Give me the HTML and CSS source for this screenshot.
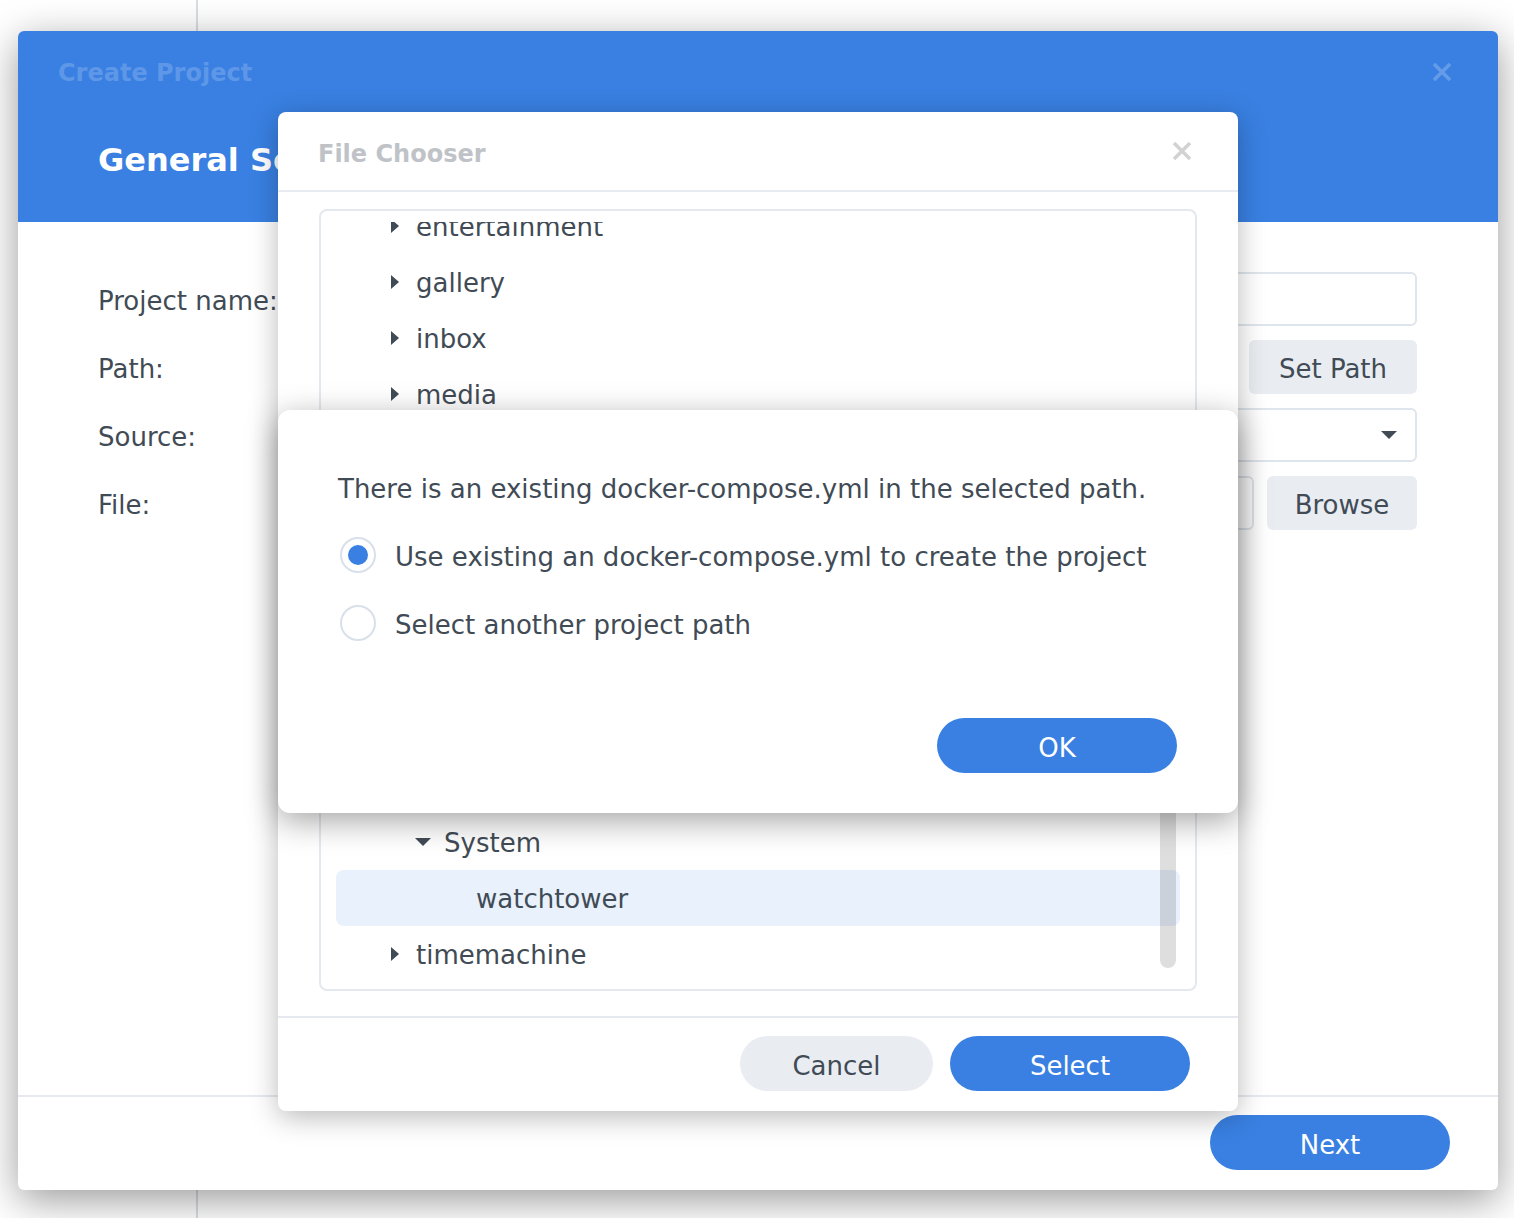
FILE: index.html
```html
<!DOCTYPE html>
<html lang="en">
<head>
<meta charset="utf-8">
<title>Create Project</title>
<link rel="stylesheet" href="styles.css">
</head>
<body>
<div class="wizard">
  <div class="wiz-head">
    <div class="wiz-top">
      <span class="wiz-title">Create Project</span>
      <svg class="x-icon wiz-close" viewBox="0 0 20 20"><path d="M2 2L18 18M18 2L2 18"/></svg>
    </div>
    <div class="wiz-step">General Settings</div>
  </div>
  <div class="wiz-body">
    <div class="form">
      <div class="frow"><span class="flabel">Project name:</span><div class="ctl"><div class="input"></div></div></div>
      <div class="frow"><span class="flabel">Path:</span><div class="ctl"><div class="path-text"></div><button class="btn btn-gray btn-setpath">Set Path</button></div></div>
      <div class="frow"><span class="flabel">Source:</span><div class="ctl"><div class="input select"><span class="caret"></span></div></div></div>
      <div class="frow"><span class="flabel">File:</span><div class="ctl"><div class="input"></div><button class="btn btn-gray btn-browse">Browse</button></div></div>
    </div>
  </div>
  <div class="wiz-foot"><button class="btn btn-blue btn-next">Next</button></div>

  <div class="chooser">
    <div class="ch-head">
      <span class="ch-title">File Chooser</span>
      <svg class="x-icon ch-close" viewBox="0 0 20 20"><path d="M2 2L18 18M18 2L2 18"/></svg>
    </div>
    <div class="ch-body">
      <div class="tree">
        <div class="tree-view">
          <ul class="tree-list">
            <li class="node l1"><span class="tw"><i class="tri-r"></i></span><span class="nm">entertainment</span></li>
            <li class="node l1"><span class="tw"><i class="tri-r"></i></span><span class="nm">gallery</span></li>
            <li class="node l1"><span class="tw"><i class="tri-r"></i></span><span class="nm">inbox</span></li>
            <li class="node l1"><span class="tw"><i class="tri-r"></i></span><span class="nm">media</span></li>
            <li class="node l1"><span class="tw"><i class="tri-r"></i></span><span class="nm">music</span></li>
            <li class="node l1"><span class="tw"><i class="tri-r"></i></span><span class="nm">photo</span></li>
            <li class="node l1"><span class="tw"><i class="tri-d"></i></span><span class="nm">docker</span></li>
            <li class="node l2"><span class="tw"><i class="tri-r"></i></span><span class="nm">Development</span></li>
            <li class="node l2"><span class="tw"><i class="tri-r"></i></span><span class="nm">Home</span></li>
            <li class="node l2"><span class="tw"><i class="tri-r"></i></span><span class="nm">Media</span></li>
            <li class="node l2"><span class="tw"><i class="tri-r"></i></span><span class="nm">Network</span></li>
            <li class="node l2"><span class="tw"><i class="tri-d"></i></span><span class="nm">System</span></li>
            <li class="node l3 selected"><span class="tw"></span><span class="nm">watchtower</span></li>
            <li class="node l1"><span class="tw"><i class="tri-r"></i></span><span class="nm">timemachine</span></li>
          </ul>
        </div>
        <div class="scrollbar"></div>
      </div>
    </div>
    <div class="ch-foot">
      <button class="btn btn-gray btn-cancel">Cancel</button>
      <button class="btn btn-blue btn-select">Select</button>
    </div>

    <div class="alert">
      <p class="alert-msg">There is an existing docker-compose.yml in the selected path.</p>
      <div class="radio-row"><span class="radio checked"></span><span class="rtext">Use existing an docker-compose.yml to create the project</span></div>
      <div class="radio-row"><span class="radio"></span><span class="rtext">Select another project path</span></div>
      <div class="alert-foot"><button class="btn btn-blue btn-ok">OK</button></div>
    </div>
  </div>
</div>
</body>
</html>
```

FILE: styles.css
```css
* { box-sizing: border-box; }
html, body { margin: 0; padding: 0; }
body {
  width: 1514px;
  height: 1218px;
  overflow: hidden;
  background: #fff linear-gradient(to right, transparent 196px, #d9dee5 196px, #d9dee5 198px, transparent 198px);
  font-family: "DejaVu Sans", Verdana, sans-serif;
  color: #414b55;
  padding: 31px 0 0 18px;
}

.btn {
  font-family: inherit;
  font-size: 26px;
  border: none;
  height: 55px;
  padding: 4px 0 0;
  cursor: pointer;
}
.btn-gray { background: #e9edf2; color: #414b55; border-radius: 6px; }
.btn-blue { background: #3980e2; color: #fff; border-radius: 28px; }

.x-icon { width: 20px; height: 20px; fill: none; stroke-width: 3.6; }

/* wizard */
.wizard {
  position: relative;
  width: 1480px;
  height: 1159px;
  background: #fff;
  border-radius: 6px;
  box-shadow: 0 10px 40px rgba(0, 0, 0, 0.4);
  display: flex;
  flex-direction: column;
}
.wiz-head {
  height: 191px;
  background: #3980e2;
  border-radius: 6px 6px 0 0;
  padding: 25px 46px 0 40px;
}
.wiz-top { display: flex; justify-content: space-between; align-items: center; height: 32px; }
.wiz-title { font-weight: bold; font-size: 24px; color: rgba(255, 255, 255, 0.2); padding-top: 2px; }
.wiz-close { stroke: rgba(255, 255, 255, 0.22); }
.wiz-step {
  margin: 52px 0 0 40px;
  font-size: 32px;
  line-height: 40px;
  font-weight: bold;
  color: #fff;
  white-space: nowrap;
}
.wiz-body { flex: 1; padding: 50px 81px 0 80px; }
.form { display: flex; flex-direction: column; gap: 14px; }
.frow { display: flex; align-items: center; height: 54px; }
.flabel { width: 300px; font-size: 26px; padding-top: 4px; }
.ctl { flex: 1; display: flex; gap: 13px; height: 54px; }
.input { flex: 1; border: 2px solid #dfe5ec; border-radius: 6px; position: relative; }
.path-text { flex: 1; }
.btn-setpath { width: 168px; height: 54px; }
.btn-browse { width: 150px; height: 54px; }
.select { display: flex; align-items: center; justify-content: flex-end; padding-right: 18px; }
.caret {
  width: 0; height: 0;
  border-left: 8px solid transparent;
  border-right: 8px solid transparent;
  border-top: 8px solid #414b55;
}
.wiz-foot {
  height: 95px;
  border-top: 2px solid #e6eaef;
  display: flex;
  justify-content: flex-end;
  align-items: flex-start;
  padding: 18px 48px 0 0;
}
.btn-next { width: 240px; }

/* file chooser */
.chooser {
  position: absolute;
  left: 260px;
  top: 81px;
  width: 960px;
  height: 999px;
  background: #fff;
  border-radius: 8px;
  box-shadow: 0 6px 28px rgba(0, 0, 0, 0.28);
  display: flex;
  flex-direction: column;
}
.ch-head {
  height: 80px;
  border-bottom: 2px solid #e8ecf0;
  padding: 4px 46px 0 40px;
  display: flex;
  align-items: center;
  justify-content: space-between;
}
.ch-title { font-size: 24px; font-weight: bold; color: #bfc3c8; padding-top: 2px; }
.ch-close { stroke: #d2d2d2; margin-top: -4px; }
.ch-body { height: 824px; padding: 17px 41px 0; }
.tree {
  position: relative;
  height: 782px;
  border: 2px solid #e4e9ef;
  border-radius: 8px;
  padding: 11px 0;
}
.tree-view { height: 756px; overflow: hidden; }
.tree-list { list-style: none; margin: -24px 0 0; padding: 0; }
.node {
  height: 56px;
  margin: 0 15px;
  border-radius: 8px;
  display: flex;
  align-items: center;
  font-size: 26px;
  white-space: nowrap;
}
.nm { padding-top: 2px; }
.node.l1 { padding-left: 45px; }
.node.l2 { padding-left: 73px; }
.node.l3 { padding-left: 105px; }
.node.selected { background: #e8f1fc; }
.tw { width: 28px; margin-right: 7px; display: flex; justify-content: center; align-items: center; }
.tri-r {
  width: 0; height: 0;
  border-top: 7.5px solid transparent;
  border-bottom: 7.5px solid transparent;
  border-left: 8px solid #414b55;
}
.tri-d {
  width: 0; height: 0;
  border-left: 8px solid transparent;
  border-right: 8px solid transparent;
  border-top: 8px solid #414b55;
}
.scrollbar {
  position: absolute;
  right: 19px;
  top: 520px;
  bottom: 21px;
  width: 16px;
  border-radius: 8px;
  background: rgba(0, 0, 0, 0.13);
}
.ch-foot {
  flex: 1;
  border-top: 2px solid #e6eaef;
  display: flex;
  justify-content: flex-end;
  align-items: flex-start;
  gap: 17px;
  padding: 18px 48px 0 0;
}
.btn-cancel { width: 193px; border-radius: 28px; }
.btn-select { width: 240px; }

/* alert */
.alert {
  position: absolute;
  left: 0;
  top: 298px;
  width: 960px;
  height: 403px;
  background: #fff;
  border-radius: 12px;
  box-shadow: 0 8px 32px rgba(0, 0, 0, 0.36);
  padding: 61px 61px 0 60px;
  font-size: 26px;
}
.alert-msg { margin: 0; line-height: 36px; }
.radio-row { display: flex; align-items: center; height: 36px; margin-top: 30px; gap: 19px; padding-left: 2px; }
.radio-row + .radio-row { margin-top: 32px; }
.rtext { padding-top: 4px; }
.radio {
  width: 36px; height: 36px;
  border: 2px solid #d8e0ea;
  border-radius: 50%;
  display: flex;
  align-items: center;
  justify-content: center;
  flex: none;
}
.radio.checked::after {
  content: "";
  width: 20px; height: 20px;
  border-radius: 50%;
  background: #3980e2;
}
.alert-foot { display: flex; justify-content: flex-end; margin-top: 77px; }
.btn-ok { width: 240px; }
```
